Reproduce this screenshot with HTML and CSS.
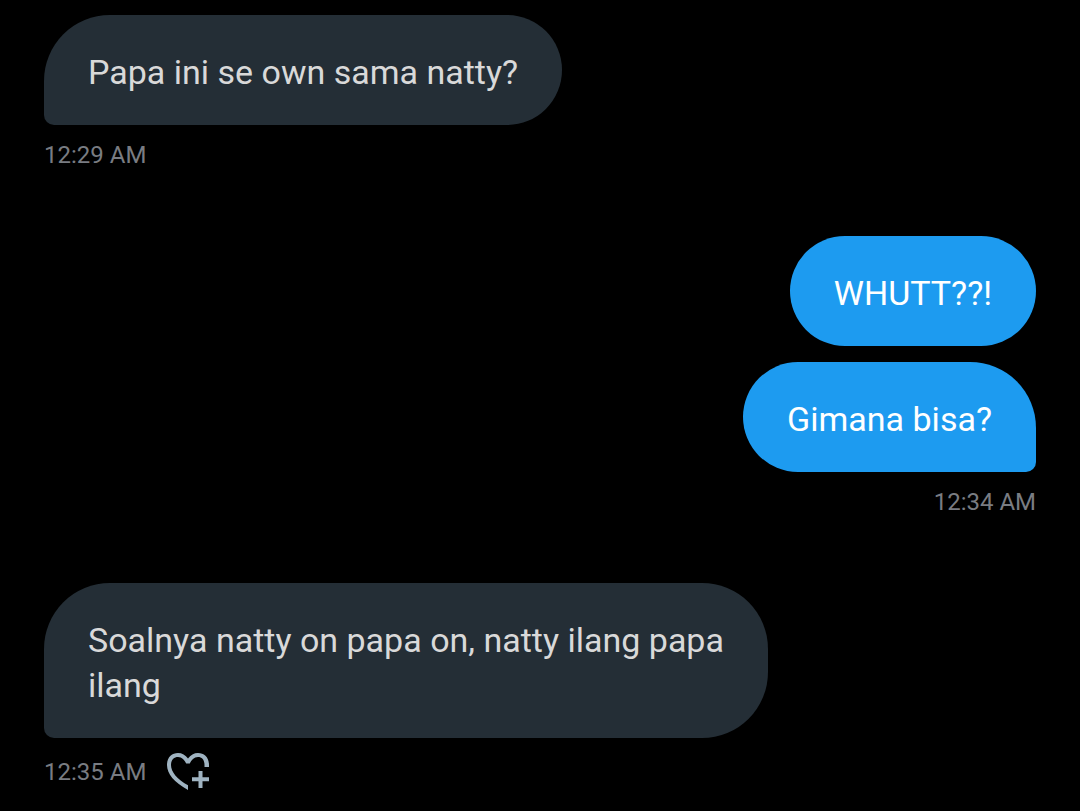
FILE: index.html
```html
<!DOCTYPE html>
<html lang="id">
<head>
  <meta charset="UTF-8">
  <meta name="viewport" content="width=device-width, initial-scale=1.0">
  <title>Messages</title>
  <link rel="stylesheet" href="styles.css">
</head>
<body>
  <main class="chat">
    <section class="group received">
      <p class="bubble short tail">Papa ini se own sama natty?</p>
      <div class="meta"><time>12:29 AM</time></div>
    </section>

    <section class="group sent">
      <p class="bubble short">WHUTT??!</p>
      <p class="bubble short tail">Gimana bisa?</p>
      <div class="meta"><time>12:34 AM</time></div>
    </section>

    <section class="group received">
      <p class="bubble tail">Soalnya natty on papa on, natty ilang papa ilang</p>
      <div class="meta">
        <time>12:35 AM</time>
        <button class="react" type="button" aria-label="Add reaction">
          <svg viewBox="0 0 44 40" width="44" height="40" fill="currentColor">
            <path d="M22 38C8 30 1 22 1 13C1 5 6 1 12 1C16 1 19.500 3 22 6.500C24.500 3 28 1 32 1C38 1 43 5 43 13V15H38.500V13C38.500 8 36 5 32 5C28 5 25.500 8 23.800 11.500H20.200C18.500 8 16 5 12 5C8 5 5 8 5 13C5 20 11 27 22 33.300Z"/>
            <path d="M32.500 19H36.500V25.200H43V29.200H36.500V36H32.500V29.200H26V25.200H32.500Z"/>
          </svg>
        </button>
      </div>
    </section>
  </main>
</body>
</html>
```

FILE: styles.css
```css
body {
  margin: 0;
  background: #000;
  font-family: Roboto, "Liberation Sans", sans-serif;
}
.chat {
  display: flex;
  flex-direction: column;
  gap: 65px;
  padding: 15px 44px;
}
.group {
  display: flex;
  flex-direction: column;
  align-items: flex-start;
}
.sent {
  align-items: flex-end;
}
.bubble {
  box-sizing: border-box;
  width: fit-content;
  max-width: 73%;
  margin: 0;
  padding: 35px 44px 30px;
  border-radius: 66px;
  background: #242e36;
  color: #d9d9d9;
  font-size: 34px;
  line-height: 45px;
}
.short {
  border-radius: 55px;
}
.sent .bubble {
  background: #1d9bf0;
  color: #fff;
}
.bubble + .bubble {
  margin-top: 16px;
}
/* the corner above the tail is rounder than the others */
.received .tail {
  border-top-left-radius: 66px;
  border-bottom-left-radius: 10px;
}
.sent .tail {
  border-top-right-radius: 66px;
  border-bottom-right-radius: 10px;
}
.meta {
  display: flex;
  align-items: center;
  gap: 20px;
  min-height: 32px;
  margin-top: 14px;
  color: #797c82;
  font-size: 24px;
}
.react {
  display: flex;
  padding: 0;
  border: 0;
  background: none;
  color: #9fb3c1;
}
```
